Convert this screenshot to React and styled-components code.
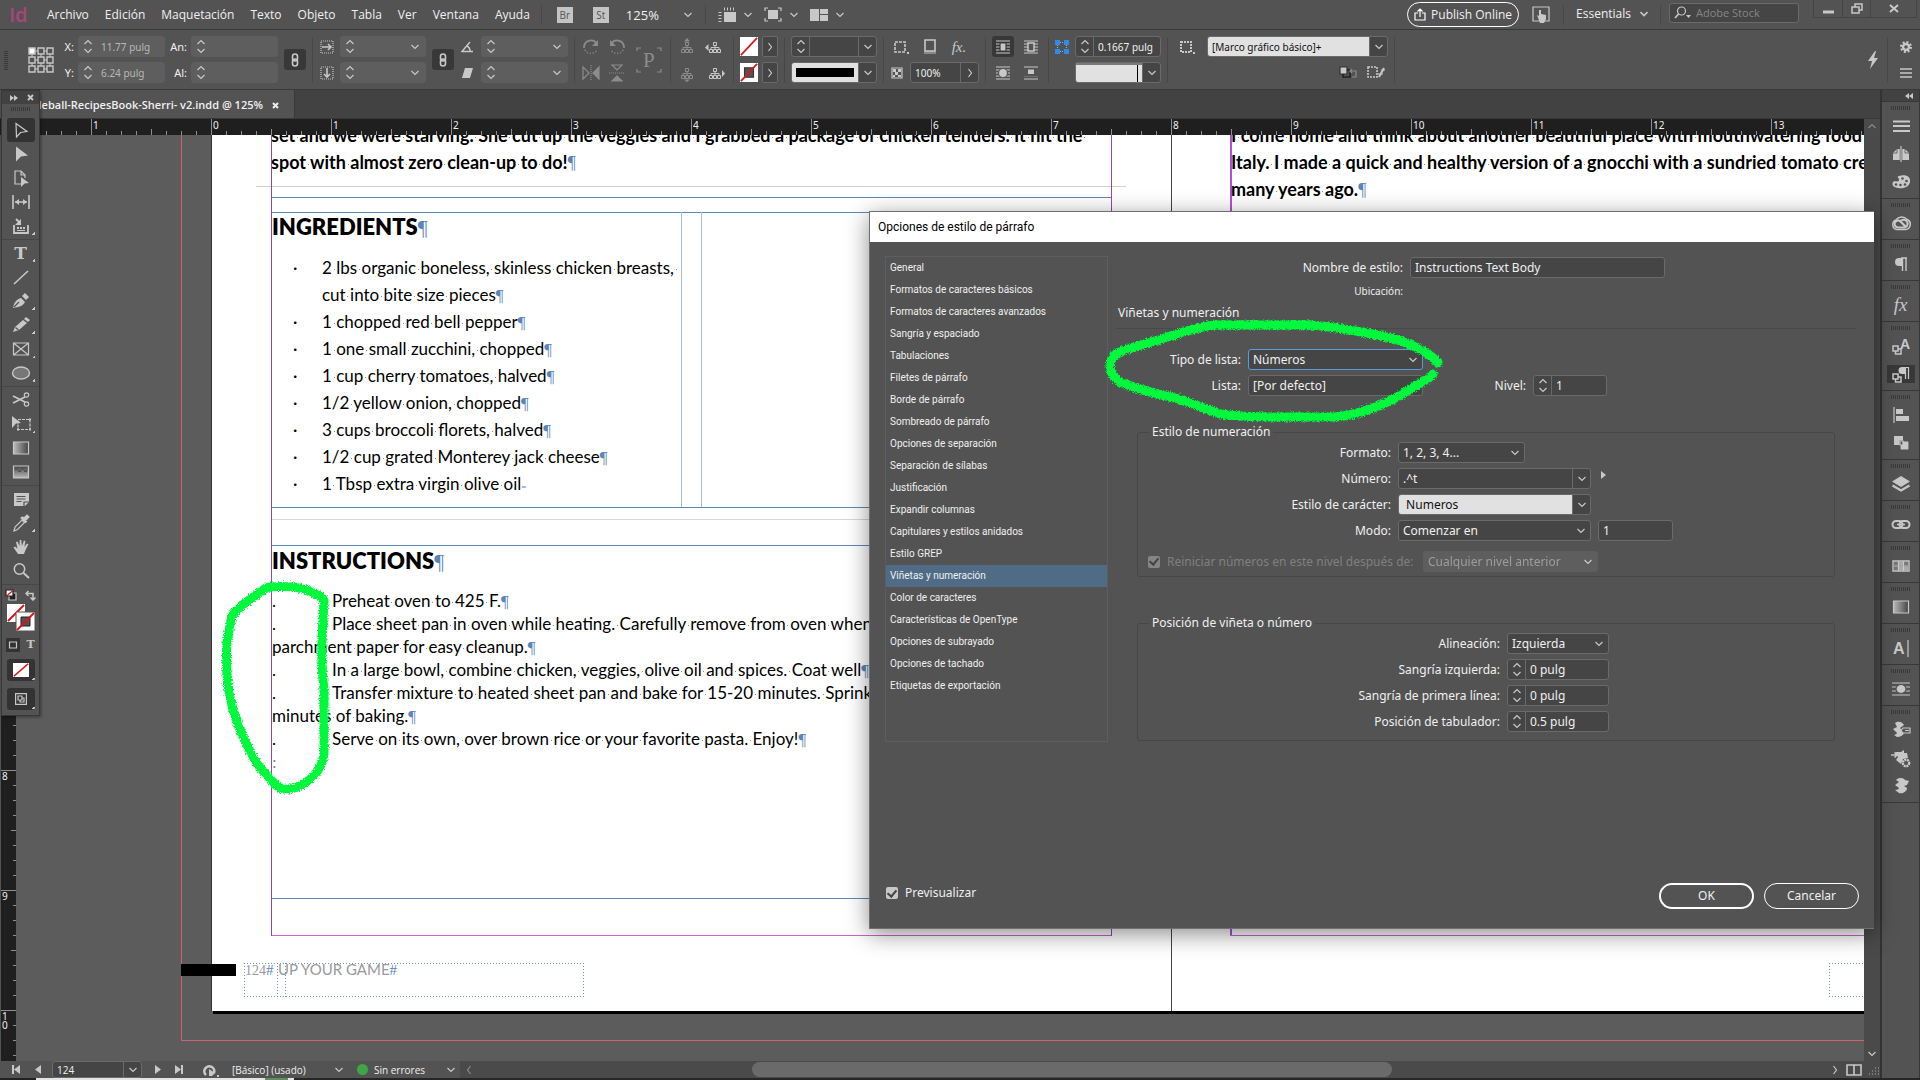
import React from 'react';
import styled, { createGlobalStyle, css } from 'styled-components';

const UI_FONT = '"Noto Sans", "Open Sans", sans-serif';
const NARROW_FONT = '"Open Sans", "Noto Sans", sans-serif';
const LIST_FONT = 'Roboto, "Open Sans", sans-serif';
const BODY_FONT = 'Lato, "Open Sans", sans-serif';

const GlobalStyle = createGlobalStyle`
  * {
    box-sizing: border-box;
  }
  body {
    margin: 0;
    background: #535353;
    color: #f0f0f0;
    font: 12px/16px ${UI_FONT};
    overflow: hidden;
  }
  button, input, select {
    font: inherit;
    color: inherit;
    margin: 0;
    padding: 0;
    border: 0;
    background: none;
    border-radius: 0;
    outline: 0;
  }
  svg {
    display: block;
    flex: none;
  }
`;

const Shell = styled.div`
  position: relative;
  display: flex;
  flex-direction: column;
  height: 100vh;
`;

/* ---------- icons ---------- */

const Svg = ({ w = 20, h = w, vb, children, ...rest }) => (
  <svg
    width={w}
    height={h}
    viewBox={vb || `0 0 ${w} ${h}`}
    fill="none"
    stroke="#c8c8c8"
    strokeWidth="1.2"
    aria-hidden="true"
    {...rest}
  >
    {children}
  </svg>
);

const F = '#c8c8c8';

const ChevronDown = (props) => (
  <Svg w={8} h={6} {...props}><path d="M0.5 1L4 4.5 7.5 1" /></Svg>
);
const ChevronUp = (props) => (
  <Svg w={8} h={6} {...props}><path d="M0.5 5L4 1.5 7.5 5" /></Svg>
);
const ChevronRight = () => <Svg w={6} h={10}><path d="M1.5 1L4.5 5 1.5 9" /></Svg>;

const icons = {
  select: <path d="M5 3.5L16 11.5 9.5 12.5 5.5 17z" />,
  direct: <path d="M5 2.5L17 11.5 10 12.5 5 17.5z" fill={F} stroke="none" />,
  page: (
    <>
      <path d="M10 16H4V3h6l4 4v3M10 3v4h4" />
      <path d="M10 9l8 6-4.500.5L10 19z" fill={F} stroke="none" />
    </>
  ),
  gap: (
    <>
      <path d="M2 3v14M18 3v14M4 10h12" strokeWidth="1.6" />
      <path d="M4 10l4-3v6zM16 10l-4-3v6z" fill={F} stroke="none" />
    </>
  ),
  collector: (
    <>
      <path d="M3 9v8h14V9M5 3l4 4" strokeWidth="1.8" />
      <path d="M10 3v6H4z" fill={F} stroke="none" />
      <path d="M6 11h2v2H6zM9 11h2v2H9zM12 11h2v2h-2zM6 14h8v1H6z" fill={F} stroke="none" />
    </>
  ),
  line: <path d="M3 17L17 4" strokeWidth="1.6" />,
  pen: (
    <>
      <path d="M2 17c1-6 4-9 8-10l4 4c-2 4-6 5-12 6z" fill={F} stroke="none" />
      <path d="M11 5l3-3 4 4-3 3z" fill={F} stroke="none" />
      <path d="M3 16l5-5" stroke="#535353" />
    </>
  ),
  pencil: (
    <>
      <path d="M2 17l2-5 8-7 4 3-8 7z" fill={F} stroke="none" />
      <path d="M13 4l2-2 4 3-2 2z" fill={F} stroke="none" />
      <path d="M4.500 12.500l3 2.500" stroke="#535353" />
    </>
  ),
  frame: <path d="M2.500 4h15v12h-15zM2.500 4l15 12M17.500 4l-15 12" />,
  ellipse: <ellipse cx="10" cy="10" rx="8.500" ry="6" fill="#777" strokeWidth="1.4" />,
  scissors: (
    <>
      <path d="M2 6l12 6M2 13l12-6" strokeWidth="1.8" />
      <circle cx="15.500" cy="5" r="2.200" />
      <circle cx="15.500" cy="14" r="2.200" />
    </>
  ),
  transform: (
    <>
      <path d="M1 2l9 7-5 .5L1 14z" fill={F} stroke="none" />
      <path d="M7 5.500h12v10H7z" strokeDasharray="3 1" />
      <path d="M6 14.500h2v2H6zM18 14.500h2v2h-2zM18 4.500h2v2h-2z" fill={F} stroke="none" />
    </>
  ),
  gradient: <path d="M2.500 4h15v12h-15z" fill="url(#ramp)" />,
  feather: (
    <>
      <path d="M2.500 4h15v12h-15z" fill="url(#fade)" />
      <path d="M4 6h3v2H4zM10 6h3v2h-3zM7 8h3v2H7zM13 8h3v2h-3z" fill="#555" stroke="none" />
    </>
  ),
  note: (
    <>
      <path d="M3 4h15v9l-4 4H3z" fill={F} stroke="none" />
      <path d="M5.500 7.500h9M5.500 10h9M5.500 12.500h5" stroke="#535353" />
      <path d="M13 17v-4h5" stroke="#535353" />
    </>
  ),
  dropper: (
    <>
      <path d="M3 18l1-4 7-7 2.500 2.500-7 7z" />
      <path d="M10 5l4.500 4.500 1-1-1-1L18 4l-2-2-3 3-1.500-1z" fill={F} />
    </>
  ),
  hand: (
    <path
      d="M7 17L2.500 10.500l1.500-1 2.500 2L5 5l1.500-.5L8.500 9l.2-6h1.600l.6 6 2-5.500 1.500.5-1 6 2.500-3.500 1.500.8-3 6L13 17z"
      fill={F}
      stroke="none"
    />
  ),
  zoom: (
    <>
      <circle cx="8.500" cy="8" r="5.200" strokeWidth="1.5" />
      <path d="M12.500 12l5.500 5" strokeWidth="2" />
    </>
  ),
  /* dock */
  lines: <path d="M2 5.500h17M2 10h17M2 15h17" strokeWidth="2" />,
  spread: (
    <>
      <path d="M2 16V9l4-4h4v11zM18 16V9l-4-4h-4v11z" fill={F} stroke="none" />
      <path d="M10 1v18" stroke="#535353" strokeWidth="2.500" />
      <path d="M10 2v16" />
      <path d="M2 9h4V5M18 9h-4V5" stroke="#535353" strokeWidth=".8" />
    </>
  ),
  palette: (
    <>
      <path d="M8 4c7-2 12 1 11 6s-6 7-12 6-6-4-5-6 6 1 6-2-3-3 0-4z" fill={F} stroke="none" />
      <g fill="#535353" stroke="none">
        <circle cx="11.500" cy="6.500" r="1.300" /><circle cx="15.500" cy="9" r="1.300" />
        <circle cx="14" cy="12.500" r="1.300" /><circle cx="9.500" cy="13" r="1.300" /><circle cx="5" cy="12.500" r="1.300" />
      </g>
    </>
  ),
  cloud: (
    <>
      <path d="M5.500 16.500a5 5 0 0 1-.5-9.500A7 7 0 0 1 16 6.500a5.200 5.200 0 0 1-1.500 10z" strokeWidth="1.500" />
      <path d="M14 14.500H7a3.500 3.500 0 1 1 2.500-6l5 5" strokeWidth="2.200" />
      <path d="M9 9a4 4 0 1 1 5 5.500" strokeWidth="2" />
    </>
  ),
  pilcrow: (
    <>
      <path d="M11 4H8a4 4 0 0 0 0 8h3z" fill={F} stroke="none" />
      <path d="M11.500 4v13M15 4v13M10 4h6" strokeWidth="1.400" />
    </>
  ),
  charStyle: (
    <>
      <path d="M2 10h5v5H2zM7 13h3v5H4.500v-3" strokeWidth="1.500" />
      <text x="9" y="13" fill={F} stroke="none" fontFamily="Liberation Sans" fontWeight="700" fontSize="14">A</text>
    </>
  ),
  paraStyle: (
    <>
      <path d="M2 10h5v5H2zM7 13h3v5H4.500v-3" strokeWidth="1.500" />
      <path d="M14 3h-3a3.500 3.500 0 0 0 0 7h3z" fill={F} stroke="none" />
      <path d="M14.500 3v12M17.500 3v12M13 3.500h5" />
    </>
  ),
  align: (
    <>
      <path d="M3 2v16" />
      <path d="M5 4h7v5H5zM5 11h13v5H5z" fill={F} stroke="none" />
    </>
  ),
  pathfinder: (
    <>
      <path d="M3 3h9v9H3z" fill={F} stroke="none" />
      <path d="M9 8h9v9H9z" fill={F} stroke="#535353" />
      <path d="M9 8h3v4H9z" fill="#535353" stroke={F} />
    </>
  ),
  layers: (
    <>
      <path d="M10 2l9 5.500-9 5.500-9-5.500z" fill={F} stroke="none" />
      <path d="M1.500 11.500L10 16.500l8.500-5" strokeWidth="2.200" />
    </>
  ),
  link: (
    <>
      <rect x="1.500" y="6" width="10" height="7" rx="3.500" strokeWidth="2" />
      <rect x="8.500" y="6" width="10" height="7" rx="3.500" strokeWidth="2" />
      <path d="M6 9.500h8" strokeWidth="1.500" />
    </>
  ),
  swatches: (
    <>
      <path d="M2 5h16v10H2z" strokeWidth="1.400" />
      <path d="M8 6h4v3.500H8zM13 10.500h4V14h-4zM8 10.500h4V14H8z" fill="#aaa" stroke="none" />
      <path d="M3 6h4v3.500H3zM3 10.500h4V14H3zM13 6h4v3.500h-4z" fill="#777" stroke="none" />
      <path d="M3 10h14M7.500 5v10M12.500 5v10" />
    </>
  ),
  story: (
    <>
      <text x="2" y="16" fill={F} stroke="none" fontFamily="Liberation Sans" fontWeight="700" fontSize="16">A</text>
      <path d="M17 2v17" />
    </>
  ),
  wrap: (
    <>
      <path d="M1 4h18M1 8h18M1 12h18M1 16h18" />
      <ellipse cx="10" cy="10" rx="5" ry="4.500" fill={F} stroke="#535353" />
    </>
  ),
  scriptTag: (
    <>
      <path d="M4 3c4-3 8 0 9 2l-4 3 4 4c0 4-5 5-7 5l-3-2c2-1 3-1 3-2L2 9l4-2z" fill={F} stroke="none" />
      <path d="M12 8h7v5h-7l-2-2.500zM14 10.500h4" fill="#535353" />
    </>
  ),
  scriptGear: (
    <>
      <path d="M4 4h6l3-2v3h3l1 5-5 1-2 5-5-4 2-3z" fill={F} stroke="none" />
      <path d="M0 7h6M3.500 4.500L6 7 3.500 9.500" strokeWidth="1.600" />
      <circle cx="15" cy="15" r="3.200" fill="#535353" strokeWidth="2.400" strokeDasharray="2 .6" />
    </>
  ),
  script: (
    <path d="M5 4c3-3 8-2 9 0l4 1-2 4-3 1 3 2c0 4-5 6-8 5l-4-3c2 0 4-1 4-2L4 9l4-3z" fill={F} stroke="none" />
  ),
};

const Icon = ({ name, size = 20 }) => <Svg w={size} vb="0 0 20 20">{icons[name]}</Svg>;

const ChainIcon = () => (
  <Svg w={10} h={14} strokeWidth="1.6">
    <rect x="2.500" y="1" width="5" height="7" rx="2.500" />
    <rect x="2.500" y="6" width="5" height="7" rx="2.500" />
  </Svg>
);

const Rotate = ({ flip }) => (
  <Svg w={18} stroke="#8c8c8c" strokeWidth="1.8">
    <g transform={flip ? 'translate(18 0) scale(-1 1)' : undefined}>
      <path d="M2 9a7 7 0 0 1 12-4.500" />
      <path d="M16 2v6h-6z" fill="#8c8c8c" stroke="none" />
      <path d="M2 9a7 7 0 0 0 13 3" strokeDasharray="1 2" />
    </g>
  </Svg>
);

const Tree = ({ dim, dir }) => (
  <Svg w={20} h={18} stroke={dim ? '#8c8c8c' : F} strokeWidth="1">
    <path d="M8.500 4.500h3v3h-3zM4.500 11.500h3v3h-3zM8.500 11.500h3v3h-3zM12.500 11.500h3v3h-3zM10 8v3M6 11V9.500h8V11" />
    {dir === 'up' && <path d="M7 3.500L10 0l3 3.500z" fill="#8c8c8c" stroke="none" />}
    {dir === 'down' && <path d="M7 15.500L10 18l3-2.500z" fill="#8c8c8c" stroke="none" />}
    {dir === 'left' && <path d="M3.500 6v7L0 9.500z" fill={F} stroke="none" />}
    {dir === 'right' && <path d="M17 6v7l3-3.500z" fill={F} stroke="none" />}
  </Svg>
);

const Lines = ({ shape }) => (
  <Svg w={16}>
    <path d="M1 2h14M1 5h14M1 8h14M1 11h14M1 14h14" />
    {shape === 'rect' && <path d="M5 4h6v8H5z" fill={F} stroke="#383838" />}
    {shape === 'box' && <path d="M5 4h6v8H5z" fill="#535353" strokeWidth="1.500" />}
    {shape === 'round' && <ellipse cx="8" cy="8" rx="4.500" ry="4.500" fill={F} stroke="#535353" />}
    {shape === 'jump' && <path d="M0 3h16v8.500H0z" fill="#535353" stroke="none" />}
    {shape === 'jump' && <path d="M5 4.500h6v4.500H5z" fill={F} stroke="none" />}
  </Svg>
);

const NoneSwatch = ({ hollow, w = 19, h = w }) => (
  <Svg w={w} h={h} vb="0 0 20 20" preserveAspectRatio="none">
    <path d="M0 0h20v20H0z" fill="#fff" stroke="none" />
    {hollow && <path d="M5 5h10v10H5z" fill="#535353" stroke="#333" />}
    <path d="M1 19L19 1" stroke="#d8161b" strokeWidth="2" />
  </Svg>
);

/* ---------- shared controls ---------- */

const Row = styled.div`
  display: flex;
  align-items: center;
  gap: ${(p) => p.$gap || 0}px;
`;

const IconButton = styled.button`
  display: flex;
  align-items: center;
  justify-content: center;
  flex: none;
  width: ${(p) => p.$w || 22}px;
  height: ${(p) => p.$h || 21}px;
  ${(p) => p.$on && css`
    background: #383838;
    border-radius: 3px;
  `}
`;

const Box = styled.div`
  display: flex;
  align-items: stretch;
  flex: none;
  width: ${(p) => p.$w}px;
  height: 21px;
  border: 1px solid ${(p) => (p.$focus ? '#5a9be0' : '#6a6a6a')};
  border-radius: 3px;
  background: #454545;
  overflow: hidden;
  ${(p) => p.$flat && css`
    border-color: #5e5e5e;
    background: #5e5e5e;
    color: #b8b8b8;
  `}

  input, select {
    flex: 1;
    min-width: 0;
    padding-left: 4px;
    ${(p) => p.$light && css`
      background: #e1e1e1;
      color: #111;
    `}
  }
`;

const SelectArea = styled.span`
  display: grid;
  flex: 1;
  align-items: stretch;

  select, svg {
    grid-area: 1 / 1;
  }
  select {
    appearance: none;
    width: 100%;
  }
  svg {
    justify-self: end;
    align-self: center;
    margin-right: 5px;
    pointer-events: none;
  }
`;

const Spin = styled.span`
  display: flex;
  flex: none;
  flex-direction: column;
  align-items: center;
  justify-content: space-between;
  width: 18px;
  padding: 2px 0;
  border-right: ${(p) => (p.$line ? '1px solid #6a6a6a' : 0)};
`;

const DropButton = styled.button`
  display: flex;
  align-items: center;
  justify-content: center;
  flex: none;
  width: 18px;
  border-left: 1px solid #6a6a6a;
`;

const Stepper = ({ line }) => (
  <Spin $line={line}><ChevronUp /><ChevronDown /></Spin>
);

const Select = ({ id, w, value, focus, flat, disabled, noArrow, label }) => (
  <Box $w={w} $focus={focus} $flat={flat}>
    <SelectArea>
      <select id={id} defaultValue={value} disabled={disabled} aria-label={label}>
        <option>{value}</option>
      </select>
      {!noArrow && <ChevronDown />}
    </SelectArea>
  </Box>
);

const SpinField = ({ id, w, value }) => (
  <Box $w={w}>
    <Stepper line />
    <input id={id} defaultValue={value} />
  </Box>
);

/* ---------- menu bar ---------- */

const MenuBar = styled.header`
  display: flex;
  align-items: center;
  height: 30px;
  padding-left: 9px;
  border-bottom: 1px solid #393939;
  font-family: ${NARROW_FONT};
`;

const Logo = styled.span`
  width: 38px;
  color: #a94579;
  font: 600 20px/28px "Open Sans", sans-serif;
`;

const Menus = styled.nav`
  display: flex;
  gap: 16px;
  margin-right: 11px;

  button {
    height: 28px;
  }
`;

const Rule = styled.i`
  flex: none;
  width: 1px;
  height: ${(p) => p.$h || 20}px;
  background: #474747;
`;

const AppBadge = styled.button`
  width: 16px;
  height: 16px;
  margin-left: ${(p) => p.$ml}px;
  background: #c4c4c4;
  color: #555;
  font-size: 10px;
  line-height: 16px;
`;

const ZoomSelect = styled.span`
  display: flex;
  align-items: center;
  justify-content: space-between;
  width: 66px;
  margin: 0 13px 0 17px;
  font-size: 13px;

  select {
    appearance: none;
    width: 40px;
  }
`;

const ViewButton = styled.button`
  display: flex;
  align-items: center;
  gap: 8px;
  margin-left: 12px;
`;

const MenuRight = styled.div`
  display: flex;
  align-items: center;
  align-self: stretch;
  margin-left: auto;
`;

const Publish = styled.button`
  display: flex;
  align-items: center;
  justify-content: center;
  gap: 5px;
  width: 112px;
  height: 25px;
  border: 1px solid #fff;
  border-radius: 13px;
  white-space: nowrap;
`;

const Workspace = styled.button`
  display: flex;
  align-items: center;
  gap: 9px;
  margin: 0 12px 2px 12px;
`;

const Search = styled.label`
  display: flex;
  align-items: center;
  gap: 4px;
  width: 130px;
  height: 20px;
  margin: 0 14px 4px 8px;
  padding-left: 4px;
  border: 1px solid #6a6a6a;
  border-radius: 3px;
  background: #454545;
  font-size: 11px;

  input {
    width: 90px;
  }
  input::placeholder {
    color: #858585;
  }
`;

const WindowButtons = styled.div`
  display: flex;
  align-self: flex-start;
  margin-right: 3px;
  border: 1px solid #454545;
  border-top: 0;

  button {
    width: 28px;
    height: 17px;
    display: flex;
    align-items: center;
    justify-content: center;
  }
  button + button {
    border-left: 1px solid #454545;
  }
  button:last-child {
    width: 46px;
  }
`;

const menus = ['Archivo', 'Edición', 'Maquetación', 'Texto', 'Objeto', 'Tabla', 'Ver', 'Ventana', 'Ayuda'];

const TopMenu = () => (
  <MenuBar>
    <Logo>Id</Logo>
    <Menus>{menus.map((m) => <button key={m}>{m}</button>)}</Menus>
    <Rule />
    <AppBadge $ml={15}>Br</AppBadge>
    <AppBadge $ml={20}>St</AppBadge>
    <ZoomSelect>
      <select aria-label="Zoom" defaultValue="125%"><option>125%</option></select>
      <ChevronDown />
    </ZoomSelect>
    <Rule />
    <ViewButton aria-label="Ver opciones">
      <Svg w={18} h={15}>
        <path d="M6 5h12v10H6z" fill={F} stroke="none" />
        <path d="M6 2h12M2 5v10" strokeDasharray="1 2" strokeWidth="3" />
      </Svg>
      <ChevronDown />
    </ViewButton>
    <ViewButton aria-label="Modo de pantalla">
      <Svg w={18} h={15}>
        <path d="M4 3h10v9H4z" fill={F} stroke="none" />
        <path d="M1 4V1h3M14 1h3v3M17 11v3h-3M4 14H1v-3" />
      </Svg>
      <ChevronDown />
    </ViewButton>
    <ViewButton aria-label="Organizar documentos">
      <Svg w={18} h={12} stroke="none"><path d="M0 0h9v12H0zM10 0h8v5h-8zM10 6h8v6h-8z" fill={F} /></Svg>
      <ChevronDown />
    </ViewButton>
    <MenuRight>
      <Publish>
        <Svg w={12} h={13}><path d="M4 5H1v7h10V5H8M6 9V1M3.500 3.500L6 1l2.500 2.500" stroke="#fff" /></Svg>
        Publish Online
      </Publish>
      <IconButton $w={44} aria-label="Táctil">
        <Svg w={18} h={17}>
          <path d="M1 1h16v14H1z" />
          <path d="M5 9l2 1V4h2v4l5 1v4l-2 4H8z" fill={F} stroke="none" />
        </Svg>
      </IconButton>
      <Rule />
      <Workspace>Essentials <ChevronDown strokeWidth="1.6" /></Workspace>
      <Rule />
      <Search>
        <Svg w={18} h={14}>
          <circle cx="7.500" cy="5" r="4" />
          <path d="M4.500 8L1 12" strokeWidth="1.600" />
          <path d="M12 9h5l-2.500 3z" fill={F} stroke="none" />
        </Svg>
        <input placeholder="Adobe Stock" aria-label="Adobe Stock" />
      </Search>
      <WindowButtons>
        <button aria-label="Minimizar"><Svg w={11} h={10}><path d="M0 8h11" strokeWidth="3" /></Svg></button>
        <button aria-label="Restaurar">
          <Svg w={12} h={11} strokeWidth="1.500"><path d="M4 4V1h7v6H8M1 4h7v6H1z" /></Svg>
        </button>
        <button aria-label="Cerrar"><Svg w={10} h={9}><path d="M1 1l8 7M9 1L1 8" strokeWidth="2" /></Svg></button>
      </WindowButtons>
    </MenuRight>
  </MenuBar>
);

/* ---------- control bar ---------- */

const ControlBar = styled.section`
  display: flex;
  align-items: center;
  gap: 6px;
  height: 60px;
  padding-left: 4px;
  border-bottom: 1px solid #393939;
  font-size: 10px;
`;

const Grip = styled.i`
  flex: none;
  width: ${(p) => (p.$wide ? 20 : 4)}px;
  height: ${(p) => (p.$wide ? 4 : 20)}px;
  background: repeating-linear-gradient(${(p) => (p.$wide ? '90deg' : '0deg')}, #3a3a3a 0 1px, transparent 1px 2px);
`;

const Stack = styled.div`
  display: grid;
  flex: none;
  grid-auto-rows: 21px;
  row-gap: 5px;
  width: ${(p) => p.$w}px;
  align-items: center;
  justify-items: ${(p) => p.$align || 'center'};
`;

const ProxyGrid = styled.div`
  display: flex;
  justify-content: flex-end;
  width: 40px;
`;

const FieldLabel = styled.label`
  display: flex;
  align-items: center;
  gap: 4px;
`;

const FieldName = styled.span`
  display: flex;
  justify-content: flex-end;
  width: ${(p) => p.$w}px;
  font-size: 11px;
`;

const BarRight = styled.div`
  display: flex;
  align-items: center;
  gap: 8px;
  margin-left: auto;
  padding-right: 4px;
`;

const SwatchGap = styled.div`
  display: flex;
  align-items: center;
  gap: 4px;
`;

const ArrowButton = styled.button`
  display: flex;
  align-items: center;
  justify-content: center;
  width: 16px;
  height: 21px;
  border: 1px solid #6a6a6a;
  border-radius: 2px;
  background: #454545;
`;

const StrokeSample = styled.span`
  flex: 1;
  padding: 5px 4px;
  background: #e1e1e1;

  &::before {
    content: '';
    display: block;
    height: 9px;
    background: #000;
  }
`;

const CornerSample = styled.span`
  flex: 1;
  background: #e1e1e1;
  border-top: 2px solid #777;
  box-shadow: inset -4px 0 #e1e1e1, inset -5px 0 #000;
`;

const FxText = styled.em`
  color: #c8c8c8;
  font: italic ${(p) => (p.$big ? 19 : 15)}px/20px "Liberation Serif", serif;
`;

const PlainDrop = styled.span`
  display: flex;
  align-items: center;
  padding-right: 6px;
`;

const FlatField = ({ w, value, label, lw, arrow }) => {
  const box = (
    <Box $w={w} $flat>
      <Stepper />
      <input defaultValue={value} aria-label={label} disabled />
      {arrow && <PlainDrop><ChevronDown /></PlainDrop>}
    </Box>
  );
  return lw ? <FieldLabel><FieldName $w={lw}>{label}</FieldName>{box}</FieldLabel> : box;
};

const Controls = () => (
  <ControlBar>
    <Grip />
    <ProxyGrid>
      <Svg w={26} h={26} strokeWidth="1.400">
        <path d="M4 4h18v18H4zM4 13h18M13 4v18" strokeWidth="1" />
        {[1, 10, 19].map((y) => [1, 10, 19].map((x) => (
          <path key={`${x}-${y}`} d={`M${x} ${y}h6v6h-6z`} fill={x + y === 2 ? '#fff' : '#535353'} />
        )))}
      </Svg>
    </ProxyGrid>
    <Stack $w={105}>
      <FlatField w={87} lw={14} label="X:" value="11.77 pulg" />
      <FlatField w={87} lw={14} label="Y:" value="6.24 pulg" />
    </Stack>
    <Stack $w={107}>
      <FlatField w={87} lw={16} label="An:" value="" />
      <FlatField w={87} lw={16} label="Al:" value="" />
    </Stack>
    <IconButton $on aria-label="Restringir"><ChainIcon /></IconButton>
    <Rule $h={46} />
    <Stack $w={15}>
      <Svg w={14}><path d="M1 1h12v12H1z" strokeDasharray="1 1" /><path d="M2 7h9M8 4l3 3-3 3" strokeWidth="1.600" /></Svg>
      <Svg w={14}><path d="M1 1h12v12H1z" strokeDasharray="1 1" /><path d="M7 2v9M4 8l3 3 3-3" strokeWidth="1.600" /></Svg>
    </Stack>
    <Stack $w={86}>
      <FlatField w={86} label="Escala X" value="" arrow />
      <FlatField w={86} label="Escala Y" value="" arrow />
    </Stack>
    <IconButton $on aria-label="Restringir escala"><ChainIcon /></IconButton>
    <Stack $w={15}>
      <Svg w={13} h={12}><path d="M9 1L1 10.500h11M6 5c2 1 3 3 3 5" strokeWidth="1.400" /></Svg>
      <Svg w={13} h={12}><path d="M4 1h8L9 11H1z" fill={F} stroke="none" /></Svg>
    </Stack>
    <Stack $w={87}>
      <FlatField w={87} label="Ángulo" value="" arrow />
      <FlatField w={87} label="Inclinación" value="" arrow />
    </Stack>
    <Rule $h={46} />
    <Stack $w={20}>
      <Rotate />
      <Svg w={18} stroke="#8c8c8c"><path d="M1 3v12l6-6z" /><path d="M9 1v16" strokeDasharray="1 1" /><path d="M17 3v12l-6-6z" fill="#8c8c8c" /></Svg>
    </Stack>
    <Stack $w={20}>
      <Rotate flip />
      <Svg w={18} stroke="#8c8c8c"><path d="M4 1h10L9 6z" /><path d="M1 9h16" strokeDasharray="1 1" /><path d="M4 17h10l-5-5z" fill="#8c8c8c" /></Svg>
    </Stack>
    <Svg w={31} h={28} stroke="#8c8c8c">
      <path d="M4 5V2h4M24 2h4v3M28 23v3h-4M8 26H4v-3" />
      <text x="10" y="21" fill="#8c8c8c" stroke="none" fontFamily="Liberation Serif" fontSize="21">P</text>
    </Svg>
    <Rule $h={46} />
    <Stack $w={20}><Tree dim dir="up" /><Tree dim dir="down" /></Stack>
    <Stack $w={24}><Tree dir="left" /><Tree dir="right" /></Stack>
    <Rule $h={46} />
    <Stack $w={38}>
      <SwatchGap><NoneSwatch w={18} h={19} /><ArrowButton aria-label="Relleno"><ChevronRight /></ArrowButton></SwatchGap>
      <SwatchGap><NoneSwatch hollow w={18} h={19} /><ArrowButton aria-label="Trazo"><ChevronRight /></ArrowButton></SwatchGap>
    </Stack>
    <Rule $h={46} />
    <Stack $w={86}>
      <Box $w={86}><Stepper line /><input aria-label="Grosor" /><DropButton aria-label="Grosor"><ChevronDown /></DropButton></Box>
      <Box $w={86}><StrokeSample /><DropButton aria-label="Tipo de trazo"><ChevronDown /></DropButton></Box>
    </Stack>
    <Rule $h={46} />
    <Stack $w={89} $align="start">
      <Row $gap={7}>
        <IconButton aria-label="Esquinas">
          <Svg w={16} h={14}><path d="M2 2h10v10H2z" strokeDasharray="3 1" strokeWidth="1.600" /><path d="M14 12h2v2h-2z" fill={F} stroke="none" /></Svg>
        </IconButton>
        <IconButton aria-label="Sombra">
          <Svg w={14} h={15}><path d="M1 12h12v3H1z" fill="#888" stroke="none" /><path d="M2 1h10v11H2z" strokeWidth="1.600" /></Svg>
        </IconButton>
        <IconButton aria-label="Efectos"><FxText>fx.</FxText></IconButton>
      </Row>
      <Row $gap={6}>
        <Svg w={14} h={12}><path d="M2 1h10v10H2z" /><path d="M3 2h3v3H3zM8 2h3v3H8zM5 5h3v3H5zM3 8h2v2H3zM8 8h3v2H8z" fill={F} stroke="none" /></Svg>
        <Box $w={69}>
          <input aria-label="Opacidad" defaultValue="100%" />
          <DropButton aria-label="Opacidad"><ChevronRight /></DropButton>
        </Box>
      </Row>
    </Stack>
    <Rule $h={46} />
    <Stack $w={22}>
      <IconButton $on aria-label="Sin ceñir"><Lines shape="rect" /></IconButton>
      <IconButton aria-label="Ceñir a objeto"><Lines shape="round" /></IconButton>
    </Stack>
    <Stack $w={22}>
      <IconButton aria-label="Ceñir a marco"><Lines shape="box" /></IconButton>
      <IconButton aria-label="Saltar objeto"><Lines shape="jump" /></IconButton>
    </Stack>
    <Rule $h={46} />
    <Stack $w={14}>
      <Svg w={14} h={14} stroke="none">
        <path d="M0 0h5v5H0zM9 0h5v5H9zM0 9h5v5H0zM9 9h5v5H9z" fill="#2d8ceb" />
        <path d="M5 2.500h4M5 11.500h4M2.500 5v4M11.500 5v4" stroke="#8ab4dc" strokeDasharray="1 1" />
      </Svg>
      <span />
    </Stack>
    <Stack $w={86}>
      <Box $w={86}><Stepper line /><input aria-label="Tamaño" defaultValue="0.1667 pulg" /></Box>
      <Box $w={86}><CornerSample /><DropButton aria-label="Forma"><ChevronDown /></DropButton></Box>
    </Stack>
    <Rule $h={46} />
    <Stack $w={27}>
      <Svg w={17} h={14}><path d="M2 2h10v10H2z" strokeDasharray="2 1" strokeWidth="2" /><path d="M14 12h2v2h-2z" fill={F} stroke="none" /></Svg>
      <span />
    </Stack>
    <Stack $w={181} $align="end">
      <Box $w={181} $light>
        <input aria-label="Estilo de objeto" defaultValue="[Marco gráfico básico]+" />
        <DropButton aria-label="Estilo de objeto"><ChevronDown /></DropButton>
      </Box>
      <Row $gap={9}>
        <Svg w={20} h={13}>
          <path d="M2 1h7v7H2z" fill={F} stroke="#333" /><path d="M9 4h3v7H5V8" stroke="#222" strokeWidth="1.600" />
          <path d="M12 5h6v6h-4M14 3l-2 2 2 2" stroke="#8c8c8c" />
        </Svg>
        <Svg w={21} h={13}><path d="M1 1h9v10H1z" strokeDasharray="2 1" strokeWidth="1.600" /><path d="M12 11l5-9" strokeWidth="2" /><path d="M11 8h5M14 4h4" /></Svg>
      </Row>
    </Stack>
    <Rule $h={46} />
    <BarRight>
      <Svg w={12} h={18}><path d="M8 0L1 10h4l-2 8 8-11H7l2-7z" fill={F} stroke="none" /></Svg>
      <Rule $h={46} />
      <Stack $w={20}>
        <Svg w={12}>
          <circle cx="6" cy="6" r="3" strokeWidth="2.400" />
          <circle cx="6" cy="6" r="5" strokeWidth="2" strokeDasharray="2 1.900" />
        </Svg>
        <Svg w={12} h={10}><path d="M0 1h12M0 5h12M0 9h12" strokeWidth="1.400" /></Svg>
      </Stack>
    </BarRight>
  </ControlBar>
);

/* ---------- document window ---------- */

const Main = styled.main`
  display: flex;
  flex: 1;
  min-height: 0;
`;

const DocArea = styled.section`
  display: flex;
  flex: 1;
  flex-direction: column;
  min-width: 0;
`;

const TabStrip = styled.div`
  display: flex;
  height: 29px;
  background: #424242;
  border-bottom: 1px solid #383838;
`;

const DocTab = styled.div`
  display: flex;
  align-items: center;
  justify-content: flex-end;
  gap: 9px;
  width: 295px;
  padding: 2px 15px 0 0;
  border-right: 1px solid #383838;
  background: #535353;
  font-family: ${NARROW_FONT};
  font-size: 11px;
  font-weight: 600;
  white-space: nowrap;
`;

const Board = styled.div`
  display: grid;
  flex: 1;
  grid-template: 16px minmax(0, 1fr) / 16px minmax(0, 1fr) 16px;
  min-height: 0;
`;

const tick = 'linear-gradient(90deg, #8e8e8e 1px, transparent 1px)';
const vtick = 'linear-gradient(#8e8e8e 1px, transparent 1px)';

const TopRuler = styled.div`
  display: flex;
  grid-column: 1 / 3;
  overflow: hidden;
  padding-left: 91px;
  background: ${tick} 91px 100% / 15px 4px repeat-x, ${tick} 91px 100% / 60px 6px repeat-x,
    ${tick} 91px 0 / 120px 100% repeat-x, #1f1f1f;
  font-size: 10px;
  line-height: 12px;

  span {
    flex: none;
    width: 120px;
    padding-left: 2px;
  }
`;

const SideRuler = styled.div`
  padding-top: 635px;
  border-left: 1px solid #535353;
  background: ${vtick} 100% 35px / 3px 15px repeat-y, ${vtick} 100% 35px / 5px 60px repeat-y,
    ${vtick} 0 35px / 100% 120px repeat-y, #1f1f1f;
  overflow: hidden;
  font-size: 10px;
  line-height: 9px;

  span {
    display: block;
    width: 8px;
    height: 120px;
    padding: 2px 0 0 1px;
    word-break: break-all;
  }
`;

const Scroller = styled.div`
  display: flex;
  grid-area: 1 / 3 / 3 / 4;
  flex-direction: column;
  align-items: center;
  justify-content: space-between;
  padding: 4px 0;
  background: #4a4a4a;
`;

const Canvas = styled.div`
  position: relative;
  overflow: hidden;
  background: #5c5c5c;
`;

const Spread = styled.div`
  position: absolute;
  left: 195px;
  right: 0;
  top: 0;
  height: 876px;
  background: #fff;
  border-left: 1px solid #333;
  box-shadow: 2px 3px 0 #000;
  color: #000;
  font-family: ${BODY_FONT};
`;

/* non-printing line on the pasteboard */
const Guide = styled.i`
  position: absolute;
  left: ${(p) => p.$x}px;
  top: ${(p) => p.$y}px;
  width: ${(p) => (p.$w ? `${p.$w}px` : '1px')};
  height: ${(p) => p.$h || 1}px;
  ${(p) => p.$fill && css`
    width: auto;
    right: 0;
  `}
  background: ${(p) => p.$c};
`;

const Frame = styled.div`
  position: absolute;
  left: ${(p) => p.$x}px;
  top: ${(p) => p.$y}px;
  width: ${(p) => p.$w}px;
  overflow: hidden;
  white-space: nowrap;
  font-size: 17px;
  line-height: 27px;
`;

const dots = 'linear-gradient(90deg, #6d93b5 1px, transparent 1px)';
const vdots = 'linear-gradient(#6d93b5 1px, transparent 1px)';

/* empty or footer frame, drawn with the sparse dotted edge */
const DottedFrame = styled(Frame)`
  height: 34px;
  padding-left: 1px;
  overflow: visible;
  background: ${dots} 0 0 / 3px 1px repeat-x, ${dots} 0 100% / 3px 1px repeat-x,
    ${vdots} 0 0 / 1px 3px repeat-y, ${vdots} 100% 0 / 1px 3px repeat-y;
  color: #999;
  font-size: 15px;
  line-height: 13px;
`;

const Intro = styled.p`
  margin: 0;
  font-size: 18px;
  font-weight: 700;
`;

const Heading = styled.h2`
  margin: 0;
  font-size: 22px;
  font-weight: 800;
  line-height: 27px;
`;

const Ingredients = styled.ul`
  margin: 14px 0 0;
  padding: 0;
  list-style: none;

  li {
    display: grid;
    grid-template-columns: 21px 29px 1fr;
  }
  li::before {
    content: '';
  }
`;

const Steps = styled.div`
  margin-top: 15px;
  line-height: 23px;

  p {
    margin: 0;
  }
  b {
    display: inline-block;
    width: 60px;
    font-weight: 400;
  }
`;

const Mark = styled.span`
  color: #5b84b9;
  font-family: "Liberation Serif", serif;
  font-size: ${(p) => (p.$small ? '9px' : 'inherit')};
  font-weight: 400;
  line-height: 1px;
`;

const Blank = styled.span`
  white-space: pre;
  background: linear-gradient(#8080d0, #8080d0) 50% 62% / 1px 1px no-repeat;
`;

const PageNo = styled.span`
  font-family: "Liberation Serif", serif;
  font-size: 14px;
`;

const Slug = styled.i`
  position: absolute;
  left: 165px;
  top: 829px;
  width: 55px;
  height: 12px;
  background: #000;
`;

const Bleed = styled.i`
  position: absolute;
  left: 165px;
  right: 0;
  top: 0;
  height: 906px;
  border: solid #d0616f;
  border-width: 0 0 1px 1px;
`;

const Typed = ({ text, end = '¶' }) => (
  <>
    {text.split(' ').map((word, i) => (
      <React.Fragment key={i}>
        {i > 0 && <Blank> </Blank>}
        {word}
      </React.Fragment>
    ))}
    {end && <Mark $small={end === '='}>{end}</Mark>}
  </>
);

const ingredients = [
  ['2 lbs organic boneless, skinless chicken breasts, ', 'cut into bite size pieces'],
  ['1 chopped red bell pepper'],
  ['1 one small zucchini, chopped'],
  ['1 cup cherry tomatoes, halved'],
  ['1/2 yellow onion, chopped'],
  ['3 cups broccoli florets, halved'],
  ['1/2 cup grated Monterey jack cheese'],
  ['1 Tbsp extra virgin olive oil'],
];

const steps = [
  ['Preheat oven to 425 F.'],
  ['Place sheet pan in oven while heating. Carefully remove from oven when', 'parchment paper for easy cleanup.'],
  ['In a large bowl, combine chicken, veggies, olive oil and spices. Coat well'],
  ['Transfer mixture to heated sheet pan and bake for 15-20 minutes. Sprinkle', 'minutes of baking.'],
  ['Serve on its own, over brown rice or your favorite pasta. Enjoy!'],
];

const BLUE = '#6187b3';
const PURPLE = '#9147b8';
const PINK = '#c766cb';

const Document = () => (
  <Canvas>
    <Spread>
      <Guide $x={44} $y={51} $w={870} $c="#cfcfcf" />
      <Guide $x={59} $y={62} $w={840} $c={BLUE} />
      <Guide $x={59} $y={77} $w={840} $c={BLUE} />
      <Guide $x={469} $y={77} $h={295} $c="#a9bdd8" />
      <Guide $x={489} $y={77} $h={295} $c="#a9bdd8" />
      <Guide $x={59} $y={372} $w={840} $c={BLUE} />
      <Guide $x={59} $y={384} $w={840} $c="#d8d8d8" />
      <Guide $x={59} $y={410} $w={840} $c={BLUE} />
      <Guide $x={59} $y={763} $w={840} $c={BLUE} />
      <Guide $x={59} $y={800} $w={840} $c={PINK} />
      <Guide $x={899} $y={0} $h={801} $c={PURPLE} />
      <Guide $x={959} $y={0} $h={876} $c="#444" />
      <Guide $x={1018} $y={0} $w={2} $h={801} $c="#b04fe0" />
      <Guide $x={1018} $y={800} $fill $c={PINK} />

      <Frame $x={59} $y={-13} $w={850}>
        <Intro>
          <Typed end="" text="set and we were starving. She cut up the veggies and I grabbed a package of chicken tenders. It hit the " /><br />
          <Typed text="spot with almost zero clean-up to do!" />
        </Intro>
      </Frame>
      <Frame $x={1019} $y={-13} $w={650}>
        <Intro>
          <Typed end="" text="I come home and think about another beautiful place with mouthwatering food" /><br />
          <Typed end="" text="Italy. I made a quick and healthy version of a gnocchi with a sundried tomato cream" /><br />
          <Typed text="many years ago." />
        </Intro>
      </Frame>
      <Frame $x={60} $y={78} $w={410}>
        <Heading>INGREDIENTS<Mark>¶</Mark></Heading>
        <Ingredients>
          {ingredients.map((lines, i) => (
            <li key={lines[0]}>
              <span>·</span>
              <span>
                {lines.length > 1 && <><Typed end="" text={lines[0]} /><br /></>}
                <Typed text={lines[lines.length - 1]} end={i === 7 ? '=' : '¶'} />
              </span>
            </li>
          ))}
        </Ingredients>
      </Frame>
      <Frame $x={60} $y={412} $w={839}>
        <Heading>INSTRUCTIONS<Mark>¶</Mark></Heading>
        <Steps>
          {steps.map((lines) => (
            <p key={lines[0]}>
              <b>.</b>
              {lines.length > 1 && <><Typed end="" text={lines[0]} /><br /></>}
              <Typed text={lines[lines.length - 1]} />
            </p>
          ))}
          <Mark>:</Mark>
        </Steps>
      </Frame>
      <Guide $x={59} $y={0} $h={801} $c={PURPLE} />
      <DottedFrame $x={32} $y={828} $w={42}><PageNo>124</PageNo><Mark>#</Mark></DottedFrame>
      <DottedFrame $x={65} $y={828} $w={307}>UP YOUR GAME<Mark>#</Mark></DottedFrame>
      <DottedFrame $x={1617} $y={828} $w={200} />
    </Spread>
    <Bleed />
    <Slug />
  </Canvas>
);

/* ---------- status bar ---------- */

const StatusBar = styled.footer`
  display: flex;
  align-items: center;
  height: 17px;
  font-family: ${NARROW_FONT};
  font-size: 10px;
  background: #4a4a4a;
`;

const StatusLeft = styled.div`
  display: flex;
  align-items: center;
  width: 460px;
  height: 100%;
  background: #535353;
  padding-left: 6px;
`;

const NavButton = styled.button`
  display: flex;
  justify-content: center;
  width: 21px;
`;

const PageBox = styled(Box)`
  height: 17px;
  margin: 0 5px 0 4px;
`;

const StatusSelect = styled.span`
  display: flex;
  align-items: center;
  justify-content: space-between;
  width: ${(p) => p.$w}px;

  select {
    appearance: none;
  }
`;

const Dot = styled.i`
  width: 11px;
  height: 11px;
  margin: 0 6px 0 14px;
  border-radius: 50%;
  background: #3fa648;
`;

const Track = styled.div`
  display: grid;
  flex: 1;
  grid-template-columns: 6px 7fr 16fr 11fr 6px;
  align-items: center;
  padding: 0 8px 0 6px;
`;

const Thumb = styled.i`
  grid-column: 3;
  height: 15px;
  border-radius: 8px;
  background: #6a6a6a;
`;

const TrackEnd = styled.span`
  grid-column: 5;
`;

const Desktop = styled.div`
  height: 2px;
  background: linear-gradient(90deg, #222 36px, #e4e4e4 36px 265px, #5f8f5f 265px 288px, #e4e4e4 288px 294px, #262626 294px);
`;

const Status = () => (
  <StatusBar>
    <StatusLeft>
      <NavButton aria-label="Primera"><Svg w={9} h={9}><path d="M1 0v9" strokeWidth="2" /><path d="M8 0v9L2 4.500z" fill={F} stroke="none" /></Svg></NavButton>
      <NavButton aria-label="Anterior"><Svg w={6} h={9}><path d="M6 0v9L0 4.500z" fill={F} stroke="none" /></Svg></NavButton>
      <PageBox $w={90}>
        <input aria-label="Página" defaultValue="124" />
        <DropButton aria-label="Páginas"><ChevronDown /></DropButton>
      </PageBox>
      <NavButton aria-label="Siguiente"><Svg w={6} h={9}><path d="M0 0v9l6-4.500z" fill={F} stroke="none" /></Svg></NavButton>
      <NavButton aria-label="Última"><Svg w={9} h={9}><path d="M8 0v9" strokeWidth="2" /><path d="M1 0v9l6-4.500z" fill={F} stroke="none" /></Svg></NavButton>
      <IconButton $w={43} $h={16} aria-label="Abrir">
        <Svg w={18} h={14}><path d="M4 12a5 5 0 1 1 8-2" strokeWidth="2.600" /><path d="M7 6l6 4-3 3H7z" fill={F} stroke="none" /><path d="M15 12h2v2h-2z" fill={F} stroke="none" /></Svg>
      </IconButton>
      <StatusSelect $w={111}>
        <select aria-label="Perfil" defaultValue="[Básico] (usado)"><option>[Básico] (usado)</option></select>
        <ChevronDown />
      </StatusSelect>
      <Dot />
      <StatusSelect $w={81}>
        <select aria-label="Errores" defaultValue="Sin errores"><option>Sin errores</option></select>
        <ChevronDown />
      </StatusSelect>
    </StatusLeft>
    <Track>
      <Svg w={6} h={10} stroke="#8a8a8a"><path d="M4.500 1L1.500 5l3 4" /></Svg>
      <Thumb />
      <TrackEnd><ChevronRight /></TrackEnd>
    </Track>
    <Row $gap={6}>
      <Svg w={16} h={12} strokeWidth="1.600"><path d="M1 1h14v10H1zM8 1v10" /></Svg>
      <Svg w={12} h={10} stroke="#7a7a7a"><path d="M1 9h10M4 6h7M7 3h4" strokeDasharray="1 2" strokeWidth="2" /></Svg>
    </Row>
  </StatusBar>
);

/* ---------- dock ---------- */

const Sliver = styled.div`
  width: 2px;
  background: #333;
`;

const Dock = styled.aside`
  width: 38px;
  border-right: 1px solid #383838;
`;

const DockHead = styled.div`
  display: flex;
  justify-content: flex-end;
  align-items: center;
  height: 12px;
  padding-right: 6px;
  background: #424242;
  border-bottom: 1px solid #383838;
`;

const DockGroup = styled.div`
  display: flex;
  flex-direction: column;
  align-items: center;
  padding: 4px 0 2px;
  border-bottom: 1px solid #383838;

  ${Grip} {
    margin-bottom: 2px;
  }
`;

const dock = [
  ['lines', 'spread', 'palette'],
  ['cloud'],
  ['pilcrow'],
  ['fx'],
  ['charStyle', 'paraStyle'],
  ['align', 'pathfinder'],
  ['layers'],
  ['link'],
  ['swatches'],
  ['gradient'],
  ['story'],
  ['wrap'],
  ['scriptTag', 'scriptGear', 'script'],
];

const DockButton = styled(IconButton)`
  width: 28px;
  height: 28px;
  ${(p) => p.$on && css`
    border: solid #535353;
    border-width: 5px 0;
    background-clip: padding-box;
  `}
`;

const PanelDock = () => (
  <Dock>
    <DockHead><Svg w={8} h={6} stroke="none"><path d="M4 0v6L0 3zM8 0v6L4 3z" fill={F} /></Svg></DockHead>
    {dock.map((group) => (
      <DockGroup key={group[0]}>
        <Grip $wide />
        {group.map((name) => (
          <DockButton key={name} $on={name === 'paraStyle'} aria-label={name}>
            {name === 'fx' ? <FxText $big>fx</FxText> : <Icon name={name} />}
          </DockButton>
        ))}
      </DockGroup>
    ))}
  </Dock>
);

/* ---------- floating tools ---------- */

const ToolPanel = styled.aside`
  position: absolute;
  left: 1px;
  top: 90px;
  width: 39px;
  border: 1px solid #383838;
  background: #535353;
  box-shadow: 1px 1px 3px rgba(0, 0, 0, 0.4);
`;

const ToolHead = styled.div`
  display: flex;
  align-items: center;
  justify-content: space-between;
  height: 13px;
  padding: 0 5px 0 8px;
  background: #424242;
`;

const ToolGrip = styled.div`
  display: flex;
  justify-content: center;
  padding: 3px 0 6px;
`;

const ToolGroup = styled.div`
  display: flex;
  flex-direction: column;
  align-items: center;
  padding: 1px 0;
  border-bottom: 1px solid #474747;
`;

const Tool = styled.button`
  display: flex;
  align-items: center;
  justify-content: center;
  width: 28px;
  height: 24px;
  border-radius: 3px;
  background: ${(p) => (p.$on ? '#333' : 'none')};
  ${(p) => p.$more && css`
    background-image: linear-gradient(135deg, transparent 50%, #c8c8c8 50%);
    background-size: 3px 3px;
    background-repeat: no-repeat;
    background-position: 25px 18px;
  `}
`;

const TypeGlyph = styled.span`
  color: #c8c8c8;
  font: 700 ${(p) => (p.$small ? 11 : 17)}px/14px "DejaVu Serif", serif;
`;

const ToolFoot = styled.div`
  display: flex;
  flex-direction: column;
  align-items: center;
  padding: 4px 0 5px;
`;

const FormatRow = styled.div`
  display: flex;
  align-items: center;
  gap: 6px;
  margin-top: 7px;
`;

const FootButton = styled(Tool)`
  height: 22px;
  margin-top: 7px;
`;

const toolGroups = [
  ['select', 'direct', 'page', 'gap', 'collector+'],
  ['type+', 'line', 'pen+', 'pencil+', 'frame+', 'ellipse+'],
  ['scissors', 'transform+', 'gradient', 'feather'],
  ['note', 'dropper+', 'hand', 'zoom'],
];

const Tools = () => (
  <ToolPanel>
    <ToolHead>
      <Svg w={8} h={6} stroke="none"><path d="M0 0v6l4-3zM4 0v6l4-3z" fill={F} /></Svg>
      <Svg w={7} h={7} strokeWidth="1.800"><path d="M1 1l5 5M6 1L1 6" /></Svg>
    </ToolHead>
    <ToolGrip><Grip $wide /></ToolGrip>
    {toolGroups.map((group) => (
      <ToolGroup key={group[0]}>
        {group.map((item) => {
          const name = item.replace('+', '');
          return (
            <Tool key={name} $on={name === 'select'} $more={item !== name} aria-label={name}>
              {name === 'type' ? <TypeGlyph>T</TypeGlyph> : <Icon name={name} />}
            </Tool>
          );
        })}
      </ToolGroup>
    ))}
    <ToolFoot>
      <Row $gap={8}>
        <Svg w={12} h={12}><path d="M4 4h7v7H4z" fill="#222" /><path d="M1 1h7v6H1z" fill="#fff" stroke="#222" /><path d="M1.500 7L8 1.500" stroke="#d8161b" /></Svg>
        <Svg w={11} h={11} strokeWidth="1.500"><path d="M1 3.500h7V10M3.500 1L1 3.500 3.500 6M5.500 7.500L8 10l2.500-2.500" /></Svg>
      </Row>
      <Svg w={28} h={30} strokeWidth="2">
        <path d="M0 3h18v18H0z" fill="#fff" stroke="none" />
        <path d="M1 20L17 4" stroke="#d8161b" />
        <path d="M9 11h19v19H9z" fill="#fff" stroke="#535353" strokeWidth="1" />
        <path d="M14 16h9v9h-9z" fill="#535353" stroke="#222" strokeWidth="1" />
        <path d="M10 29L27 12" stroke="#d8161b" />
      </Svg>
      <FormatRow>
        <Svg w={14} h={14}><path d="M0 0h14v14H0z" fill="#333" stroke="none" /><path d="M3.500 4h7v6h-7z" /></Svg>
        <TypeGlyph $small>T</TypeGlyph>
      </FormatRow>
      <FootButton $on $more aria-label="Aplicar ninguno"><NoneSwatch w={16} h={14} /></FootButton>
      <FootButton $on $more aria-label="Modo de pantalla"><Svg w={12} h={12}><path d="M.6.6h10.800v10.800H.6zM3 3h4v4H3zM7 5h2v4H5V7" /></Svg></FootButton>
    </ToolFoot>
  </ToolPanel>
);

/* ---------- dialog ---------- */

const Dialog = styled.form`
  position: absolute;
  top: 211px;
  right: 46px;
  display: flex;
  flex-direction: column;
  width: 1005px;
  min-height: 718px;
  border: 1px solid #707070;
  border-right-width: 0;
  background: #535353;
  box-shadow: 0 5px 22px rgba(0, 0, 0, 0.45);
`;

const DialogTitle = styled.h1`
  margin: 0;
  padding: 0 8px;
  background: #fff;
  color: #000;
  font: 400 12px/30px ${LIST_FONT};
`;

const DialogBody = styled.div`
  display: grid;
  grid-template-columns: 223px minmax(0, 1fr);
  column-gap: 8px;
  padding: 14px 18px 0 15px;
`;

const Sections = styled.ul`
  height: 486px;
  margin: 0;
  padding: 0;
  border: 1px solid #5e5e5e;
  list-style: none;
  font-family: ${LIST_FONT};
  font-size: 10px;
`;

const SectionButton = styled.button`
  display: block;
  width: 100%;
  height: 22px;
  padding: 0 0 1px 4px;
  text-align: left;
  background: ${(p) => (p.$on ? '#4f6b86' : 'none')};
`;

const Settings = styled.div`
  padding-top: 1px;
`;

const FormRow = styled.div`
  display: flex;
  align-items: center;
  gap: 7px;
  margin-bottom: 5px;
`;

const FormLabel = styled.label`
  flex: none;
  width: ${(p) => p.$w}px;
  text-align: right;
  white-space: nowrap;
`;

const Location = styled.div`
  width: 287px;
  text-align: right;
  font-size: 10px;
`;

const SectionTitle = styled.h2`
  margin: 5px 0 20px;
  padding: 0 2px 6px;
  border-bottom: 1px solid #484848;
  font-size: 12px;
  font-weight: 400;
  line-height: 18px;
`;

const Group = styled.fieldset`
  min-width: 0;
  margin: ${(p) => p.$mt}px 21px 0;
  padding: 2px 0 ${(p) => p.$pb}px;
  border: 1px solid #474747;
  border-radius: 3px;

  legend {
    margin-left: 11px;
    padding: 0 3px;
  }
  ${FormRow}:last-child {
    margin-bottom: 0;
  }
`;

const ResetRow = styled.div`
  display: flex;
  align-items: center;
  gap: 7px;
  margin-top: 10px;
  padding-left: 10px;
  color: #808080;

  label {
    width: 249px;
    white-space: nowrap;
  }
`;

const Check = styled.input`
  appearance: none;
  flex: none;
  width: 12px;
  height: 12px;
  border-radius: 2px;
  background: ${(p) => (p.disabled ? '#858585' : '#c8c8c8')};
  display: grid;
  place-items: center;

  &:checked::before {
    content: '';
    width: 4px;
    height: 7px;
    margin-top: -2px;
    border: solid #444;
    border-width: 0 2px 2px 0;
    transform: rotate(40deg);
  }
`;

const DialogFoot = styled.div`
  display: flex;
  align-items: center;
  gap: 10px;
  margin-top: auto;
  padding: 0 15px 19px 16px;

  label {
    display: flex;
    align-items: center;
    gap: 7px;
    margin: 0 auto 6px 0;
  }
`;

const Pill = styled.button`
  width: 95px;
  height: 26px;
  border: ${(p) => (p.$main ? 2 : 1)}px solid #fff;
  border-radius: 13px;
`;

const sections = [
  'General', 'Formatos de caracteres básicos', 'Formatos de caracteres avanzados', 'Sangría y espaciado',
  'Tabulaciones', 'Filetes de párrafo', 'Borde de párrafo', 'Sombreado de párrafo', 'Opciones de separación',
  'Separación de sílabas', 'Justificación', 'Expandir columnas', 'Capitulares y estilos anidados',
  'Estilo GREP', 'Viñetas y numeración', 'Color de caracteres', 'Características de OpenType',
  'Opciones de subrayado', 'Opciones de tachado', 'Etiquetas de exportación',
];

const StyleDialog = () => (
  <Dialog onSubmit={(e) => e.preventDefault()}>
    <DialogTitle>Opciones de estilo de párrafo</DialogTitle>
    <DialogBody>
      <Sections>
        {sections.map((s) => (
          <li key={s}><SectionButton type="button" $on={s === 'Viñetas y numeración'}>{s}</SectionButton></li>
        ))}
      </Sections>
      <Settings>
        <FormRow>
          <FormLabel $w={287} htmlFor="name">Nombre de estilo:</FormLabel>
          <Box $w={255}><input id="name" defaultValue="Instructions Text Body" /></Box>
        </FormRow>
        <Location>Ubicación:</Location>
        <SectionTitle>Viñetas y numeración</SectionTitle>
        <FormRow>
          <FormLabel $w={125} htmlFor="type">Tipo de lista:</FormLabel>
          <Select id="type" w={175} value="Números" focus />
        </FormRow>
        <FormRow>
          <FormLabel $w={125} htmlFor="list">Lista:</FormLabel>
          <Select id="list" w={175} value="[Por defecto]" noArrow />
          <FormLabel $w={96} htmlFor="level">Nivel:</FormLabel>
          <SpinField id="level" w={74} value="1" />
        </FormRow>
        <Group $mt={28} $pb={4}>
          <legend>Estilo de numeración</legend>
          <FormRow>
            <FormLabel $w={253} htmlFor="format">Formato:</FormLabel>
            <Select id="format" w={127} value="1, 2, 3, 4..." />
          </FormRow>
          <FormRow>
            <FormLabel $w={253} htmlFor="number">Número:</FormLabel>
            <Box $w={193}>
              <input id="number" defaultValue=".^t" />
              <DropButton type="button" aria-label="Número"><ChevronDown /></DropButton>
            </Box>
            <Svg w={9} h={18}><path d="M3 1v8l5-4z" fill={F} stroke="none" /></Svg>
          </FormRow>
          <FormRow>
            <FormLabel $w={253} htmlFor="char">Estilo de carácter:</FormLabel>
            <Box $w={193} $light>
              <input id="char" defaultValue=" Numeros" />
              <DropButton type="button" aria-label="Estilo"><ChevronDown /></DropButton>
            </Box>
          </FormRow>
          <FormRow>
            <FormLabel $w={253} htmlFor="mode">Modo:</FormLabel>
            <Select id="mode" w={193} value="Comenzar en" />
            <Box $w={75}><input aria-label="Comenzar en" defaultValue="1" /></Box>
          </FormRow>
          <ResetRow>
            <Check type="checkbox" id="reset" defaultChecked disabled />
            <label htmlFor="reset">Reiniciar números en este nivel después de:</label>
            <Select id="after" label="Nivel anterior" w={175} value="Cualquier nivel anterior" flat disabled />
          </ResetRow>
        </Group>
        <Group $mt={38} $pb={8}>
          <legend>Posición de viñeta o número</legend>
          <FormRow>
            <FormLabel $w={362} htmlFor="alignment">Alineación:</FormLabel>
            <Select id="alignment" w={102} value="Izquierda" />
          </FormRow>
          <FormRow>
            <FormLabel $w={362} htmlFor="left">Sangría izquierda:</FormLabel>
            <SpinField id="left" w={102} value="0 pulg" />
          </FormRow>
          <FormRow>
            <FormLabel $w={362} htmlFor="first">Sangría de primera línea:</FormLabel>
            <SpinField id="first" w={102} value="0 pulg" />
          </FormRow>
          <FormRow>
            <FormLabel $w={362} htmlFor="tab">Posición de tabulador:</FormLabel>
            <SpinField id="tab" w={102} value="0.5 pulg" />
          </FormRow>
        </Group>
      </Settings>
    </DialogBody>
    <DialogFoot>
      <label><Check type="checkbox" defaultChecked />Previsualizar</label>
      <Pill $main>OK</Pill>
      <Pill type="button">Cancelar</Pill>
    </DialogFoot>
  </Dialog>
);

/* ---------- marker strokes ---------- */

const Ink = styled.svg`
  position: absolute;
  right: ${(p) => p.$right};
  left: ${(p) => p.$left};
  top: ${(p) => p.$top}px;
  pointer-events: none;
`;

const inkProps = { fill: 'none', stroke: '#00f93d', strokeWidth: 9, strokeLinecap: 'round', strokeLinejoin: 'round' };

const Marker = () => (
  <>
    <Ink width="130" height="230" viewBox="210 570 130 230" $left="210px" $top={570} {...inkProps}>
      <defs>
        <filter id="rough">
          <feTurbulence baseFrequency="0.6" numOctaves="2" />
          <feDisplacementMap in="SourceGraphic" scale="4" xChannelSelector="R" yChannelSelector="G" />
        </filter>
        <linearGradient id="ramp"><stop stopColor="#bbb" /><stop offset="1" stopColor="#444" /></linearGradient>
        <linearGradient id="fade" x2="0" y2="1"><stop stopColor="#444" /><stop offset="1" stopColor="#bbb" /></linearGradient>
      </defs>
      <path
        filter="url(#rough)"
        d="M265 587C270 585 290 585 298 587Q308 589 317 594L323 599Q322 620 321 640T323 690V740Q324 755 320 764 315 775 304 782 295 788 287 788 280 789 274 783L262 770Q253 760 248 748 240 732 236 720 228 700 226 673 225 655 226 640L231 614 244 602z"
      />
    </Ink>
    <Ink width="350" height="120" viewBox="1100 310 350 120" $right="470px" $top={310} {...inkProps}>
      <path
        filter="url(#rough)"
        d="M1437 362Q1429 352 1410 344 1395 336 1342 328 1310 323 1293 324H1215Q1200 325 1170 335L1121 350Q1110 354 1109 365 1109 375 1121 382 1145 391 1178 398L1219 413Q1240 416 1276 416H1330Q1352 416 1382 403 1400 395 1419 382 1430 377 1432 373"
      />
    </Ink>
  </>
);

export default function App() {
  return (
    <Shell>
      <GlobalStyle />
      <TopMenu />
      <Controls />
      <Main>
        <DocArea>
          <TabStrip>
            <DocTab>
              kleball-RecipesBook-Sherri- v2.indd @ 125%
              <Svg w={7} h={7} strokeWidth="2"><path d="M1 1l5 5M6 1L1 6" stroke="#eee" /></Svg>
            </DocTab>
          </TabStrip>
          <Board>
            <TopRuler>
              {[1, 0, 1, 2, 3, 4, 5, 6, 7, 8, 9, 10, 11, 12, 13].map((n, i) => <span key={i}>{n}</span>)}
            </TopRuler>
            <SideRuler><span>8</span><span>9</span><span>10</span></SideRuler>
            <Document />
            <Scroller><ChevronUp stroke="#8a8a8a" /><ChevronDown /></Scroller>
          </Board>
          <Status />
        </DocArea>
        <Sliver />
        <PanelDock />
      </Main>
      <Desktop />
      <Tools />
      <StyleDialog />
      <Marker />
    </Shell>
  );
}
